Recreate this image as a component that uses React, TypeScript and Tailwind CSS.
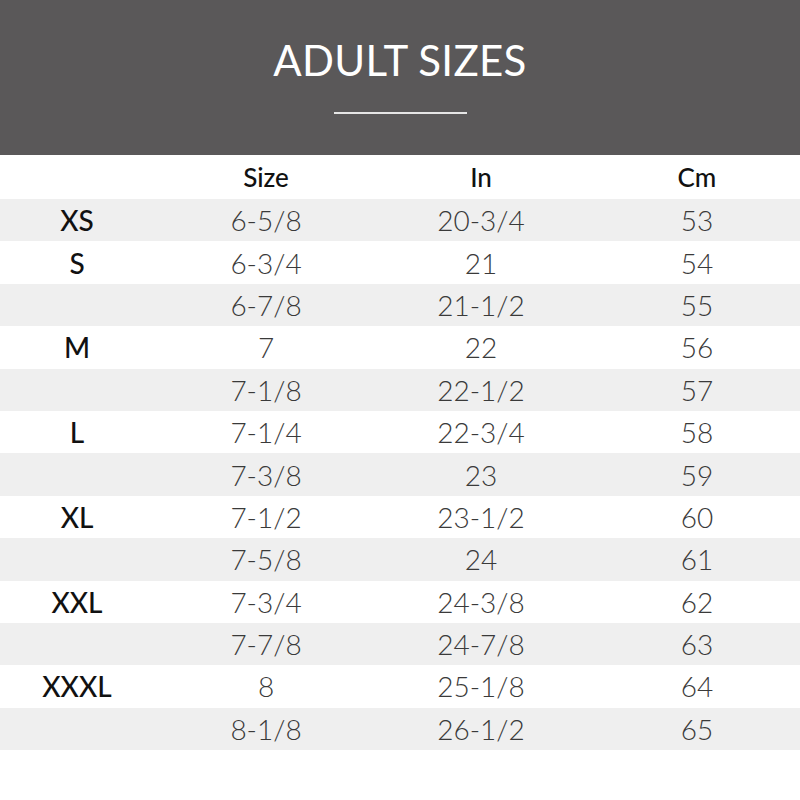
const rows = [
  { label: "XS", size: "6-5/8", inch: "20-3/4", cm: "53" },
  { label: "S", size: "6-3/4", inch: "21", cm: "54" },
  { label: "", size: "6-7/8", inch: "21-1/2", cm: "55" },
  { label: "M", size: "7", inch: "22", cm: "56" },
  { label: "", size: "7-1/8", inch: "22-1/2", cm: "57" },
  { label: "L", size: "7-1/4", inch: "22-3/4", cm: "58" },
  { label: "", size: "7-3/8", inch: "23", cm: "59" },
  { label: "XL", size: "7-1/2", inch: "23-1/2", cm: "60" },
  { label: "", size: "7-5/8", inch: "24", cm: "61" },
  { label: "XXL", size: "7-3/4", inch: "24-3/8", cm: "62" },
  { label: "", size: "7-7/8", inch: "24-7/8", cm: "63" },
  { label: "XXXL", size: "8", inch: "25-1/8", cm: "64" },
  { label: "", size: "8-1/8", inch: "26-1/2", cm: "65" },
];

const cols = "grid grid-cols-[154px_224px_206px_1fr] items-center text-center";

export default function App() {
  return (
    <div className="w-[800px] h-[800px] bg-white font-['Lato','Liberation_Sans',sans-serif]">
      {/* Banner */}
      <header className="h-[155px] bg-[#5a5859] flex flex-col items-center pt-[39px]">
        <h1 className="text-white text-[42px] leading-none font-normal tracking-[0.3px]">ADULT SIZES</h1>
        <div className="mt-[31px] w-[133px] h-[2px] bg-[#e6e6e6]" />
      </header>

      {/* Column heads */}
      <div className={`${cols} h-[44px] text-[26px] font-medium text-[#111]`}>
        <span />
        <span>Size</span>
        <span>In</span>
        <span className="pl-[10px]">Cm</span>
      </div>

      {rows.map((r, i) => (
        <div
          key={r.size}
          className={`${cols} h-[42.4px] text-[28px] ${i % 2 === 0 ? "bg-[#efefef]" : "bg-white"}`}
        >
          <span className="font-medium text-[#111]">{r.label}</span>
          <span className="font-light text-[#3a3a3a]">{r.size}</span>
          <span className="font-light text-[#3a3a3a]">{r.inch}</span>
          <span className="font-light text-[#3a3a3a] pl-[10px]">{r.cm}</span>
        </div>
      ))}
    </div>
  );
}
